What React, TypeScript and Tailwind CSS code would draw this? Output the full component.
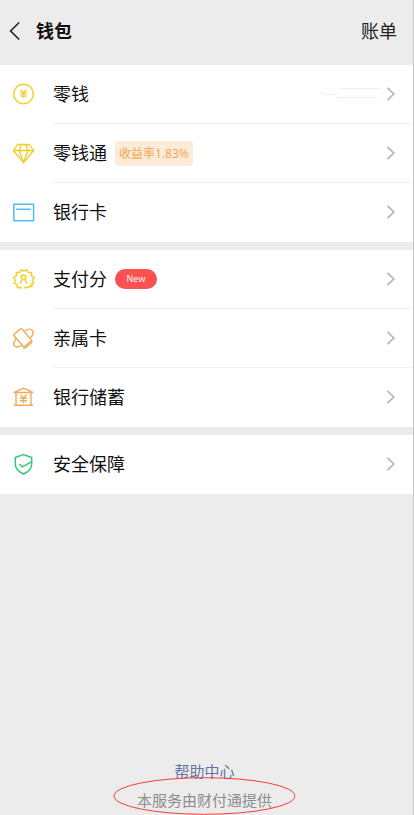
import type { ReactNode } from 'react';

interface WalletItem {
  id: string;
  label: string;
  icon: ReactNode;
  extra?: ReactNode;
  value?: ReactNode;
}

const iconProps = {
  viewBox: '0 0 23 23',
  fill: 'none',
  strokeWidth: 1.5,
  className: 'w-[23px] h-[23px] shrink-0',
  'aria-hidden': true,
} as const;

function CoinIcon() {
  return (
    <svg {...iconProps} stroke="#f7cf33">
      <circle cx="11.5" cy="11" r="9.8" />
      <path d="M8.6 6.7l2.9 3.4 2.9-3.4M11.5 10.1v5.2M8.2 10.6h6.6M8.2 13h6.6" />
    </svg>
  );
}

function DiamondIcon() {
  return (
    <svg {...iconProps} stroke="#f5cb22" strokeWidth={1.3} strokeLinejoin="round">
      <path d="M5.6 2.5h11.8l4.2 6-10.1 12L1.4 8.5z" />
      <path d="M1.4 8.5h20.2M9.3 2.5l-2.1 6 4.3 12 4.3-12-2.1-6" />
    </svg>
  );
}

function CardIcon() {
  return (
    <svg {...iconProps} stroke="#4cbdf5">
      <rect x="1.8" y="3.3" width="19.8" height="16.4" rx="0.5" />
      <path d="M4.2 8.3h14.6" />
    </svg>
  );
}

function ScoreIcon() {
  return (
    <svg {...iconProps} stroke="#f7cd2b" strokeWidth={1.4} strokeLinejoin="round">
      <path d="M9.6 20.9l-1-1.6-3.4.5-.1-3.4-3.1-1.3 1.6-3-2.1-2.7 2.9-1.6-.1-3.4 3.4.1 1.4-3 2.8 1.7 2.7-1.7 1.5 3 3.4-.1-.1 3.4 2.9 1.6-2.1 2.7 1.6 3-3.1 1.2-.5 2.2-4.5 1.5-1.3-1.4" />
      <path d="M18.2 18.8l3-1.2" />
      <circle cx="11.5" cy="9.3" r="2.3" />
      <path d="M8.2 15.6c.3-2.3 1.2-3.2 2.4-4M14.8 15.6c-.3-2.3-1.2-3.2-2.4-4" />
    </svg>
  );
}

function FamilyCardIcon() {
  return (
    <svg {...iconProps} stroke="#f3a64f" strokeWidth={1.3} strokeLinejoin="round" strokeLinecap="round">
      <path d="M2.1 7.2l6.2-5.3q.9-.7 1.7.1l9 10.7q.7.9-.1 1.6l-6 5q-.9.7-1.6-.1L2 8.8q-.7-.9.1-1.6z" />
      <path d="M13.2 3.6c2.8-1.9 5.9-2.1 7.2-.3 1.2 1.8.4 4.6-1.5 7.2" />
      <path d="M3.8 12.2c-2 2.8-2.6 5.5-1.3 6.9 1.3 1.3 4 .9 6.6-.4" />
      <path d="M11.8 21h1.4l6.6-5.6v-1.6" />
    </svg>
  );
}

function BankIcon() {
  return (
    <svg {...iconProps} stroke="#f1ab5c" strokeWidth={1.4}>
      <path d="M2.2 6.5l9.3-4.4 9.3 4.4z" strokeLinejoin="round" />
      <path d="M4 7v12M19 7v12M1.8 19.3h19.4" />
      <path d="M8.4 8.4l3.1 3.5 3.1-3.5M11.5 11.9v5.3M8 12.2h7M8 14.7h7" />
    </svg>
  );
}

function ShieldIcon() {
  return (
    <svg {...iconProps} stroke="#33c978">
      <path d="M11.5 1.6l8.2 2.9v6.6c0 4.6-3.2 7.8-8.2 9.9-5-2.1-8.2-5.3-8.2-9.9V4.5z" strokeLinejoin="round" />
      <path d="M7.4 11l3 2.8 9-4.9" />
    </svg>
  );
}

function ChevronRight() {
  return (
    <svg viewBox="0 0 10 16" fill="none" stroke="#b5b5b5" strokeWidth={1.7} className="w-[10px] h-4 shrink-0" aria-hidden>
      <path d="M1.5 1.8L7.8 8l-6.3 6.2" />
    </svg>
  );
}

// Faint strokes left where the balance is hidden
function HiddenBalance() {
  return (
    <svg viewBox="0 0 64 14" fill="none" stroke="#eeeeee" className="w-16 h-[14px]" role="img" aria-label="余额已隐藏">
      <path d="M2 5.5l3 1M5 7.5h14M22 1.5h41M19 10.5h40" />
    </svg>
  );
}

const groups: WalletItem[][] = [
  [
    { id: 'balance', label: '零钱', icon: <CoinIcon />, value: <HiddenBalance /> },
    {
      id: 'fund',
      label: '零钱通',
      icon: <DiamondIcon />,
      extra: (
        <span className="h-[25px] px-1 rounded bg-[#fdebd9] text-[#f0a650] text-xs leading-[25px]">收益率1.83%</span>
      ),
    },
    { id: 'cards', label: '银行卡', icon: <CardIcon /> },
  ],
  [
    {
      id: 'score',
      label: '支付分',
      icon: <ScoreIcon />,
      extra: (
        <span className="w-[42px] h-5 rounded-full bg-[#fa5151] text-white text-[9px] leading-5 text-center">New</span>
      ),
    },
    { id: 'family', label: '亲属卡', icon: <FamilyCardIcon /> },
    { id: 'savings', label: '银行储蓄', icon: <BankIcon /> },
  ],
  [{ id: 'security', label: '安全保障', icon: <ShieldIcon /> }],
];

function WalletRow({ item, last }: { item: WalletItem; last: boolean }) {
  return (
    <li>
      <button type="button" className="w-full h-[59px] pl-3 flex items-center gap-[18px] text-left">
        {item.icon}
        <span className={`flex-1 h-full pr-[17px] flex items-center border-b ${last ? 'border-transparent' : 'border-[#f1f1f1]'}`}>
          <span className="text-lg text-[#111111]">{item.label}</span>
          {item.extra && <span className="ml-2 flex items-center">{item.extra}</span>}
          <span className="ml-auto flex items-center gap-1">
            {item.value}
            <ChevronRight />
          </span>
        </span>
      </button>
    </li>
  );
}

export default function App() {
  return (
    <div className="min-h-screen flex flex-col bg-[#ececec] border-r border-[#c8c8c8] [font-family:'Open_Sans','Noto_Sans_CJK_SC',sans-serif]">
      <header className="h-[65px] pl-2 pr-4 pb-1 flex items-center">
        <button type="button" aria-label="返回" className="w-7 h-8 flex items-center">
          <svg viewBox="0 0 14 20" fill="none" stroke="#222222" strokeWidth={1.6} className="w-[14px] h-5" aria-hidden>
            <path d="M11.2 1.5L2.6 10l8.6 8.5" />
          </svg>
        </button>
        <h1 className="text-lg font-bold text-[#111111]">钱包</h1>
        <a href="#bill" className="ml-auto text-lg text-[#222222]">账单</a>
      </header>

      <main className="flex flex-col gap-2">
        {groups.map(group => (
          <ul key={group[0].id} className="bg-white">
            {group.map((item, i) => (
              <WalletRow key={item.id} item={item} last={i === group.length - 1} />
            ))}
          </ul>
        ))}
      </main>

      <footer className="mt-auto pt-10 pr-1 pb-[3px] flex flex-col items-center gap-[5px] text-[15px] leading-6">
        <a href="#help" className="text-[#6375a0]">帮助中心</a>
        <p className="relative text-[#8c8c8c]">
          本服务由财付通提供
          <svg
            viewBox="0 0 183 38"
            fill="none"
            stroke="#f23c3c"
            className="absolute left-1/2 bottom-[-3px] w-[183px] h-[38px] -translate-x-1/2"
            aria-hidden
          >
            <ellipse cx="92" cy="19" rx="90.5" ry="18.3" />
          </svg>
        </p>
      </footer>
    </div>
  );
}
